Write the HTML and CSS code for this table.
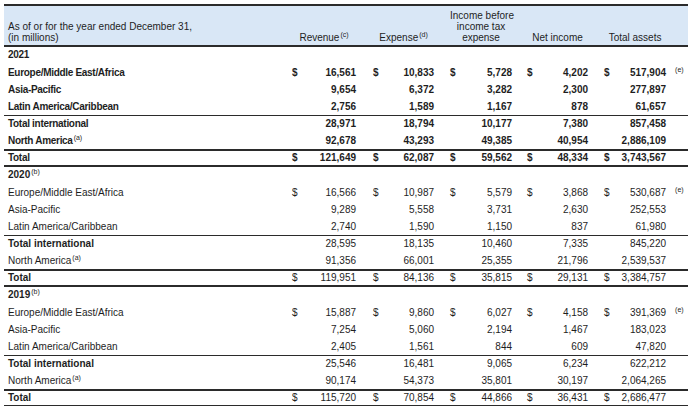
FILE: index.html
```html
<!DOCTYPE html>
<html>
<head>
<meta charset="utf-8">
<link rel="stylesheet" href="styles.css">
</head>
<body>
<table class="geo">
  <colgroup>
    <col class="c-lbl">
    <col class="c-d1"><col class="c-n1">
    <col class="c-d"><col class="c-n">
    <col class="c-d"><col class="c-n">
    <col class="c-d4"><col class="c-n4">
    <col class="c-d"><col class="c-n">
    <col class="c-fn">
  </colgroup>
  <thead>
    <tr>
      <th class="lbl">As of or for the year ended December 31,<br>(in millions)</th>
      <th colspan="2" class="h p1">Revenue<sup>(c)</sup></th>
      <th colspan="2" class="h p2">Expense<sup>(d)</sup></th>
      <th colspan="2" class="h p3">Income before<br>income tax<br>expense</th>
      <th colspan="2" class="h p4">Net income</th>
      <th colspan="2" class="h p5">Total assets</th>
      <th class="h"></th>
    </tr>
  </thead>
  <tbody class="cur">
    <tr class="yr"><td class="lbl" colspan="12">2021</td></tr>
    <tr><td class="lbl">Europe/Middle East/Africa</td><td class="d p1">$</td><td class="n">16,561</td><td class="d p2">$</td><td class="n">10,833</td><td class="d p3">$</td><td class="n">5,728</td><td class="d p4">$</td><td class="n">4,202</td><td class="d p5">$</td><td class="n">517,904</td><td class="fn">(e)</td></tr>
    <tr><td class="lbl">Asia-Pacific</td><td class="d p1"></td><td class="n">9,654</td><td class="d p2"></td><td class="n">6,372</td><td class="d p3"></td><td class="n">3,282</td><td class="d p4"></td><td class="n">2,300</td><td class="d p5"></td><td class="n">277,897</td><td class="fn"></td></tr>
    <tr><td class="lbl">Latin America/Caribbean</td><td class="d p1"></td><td class="n">2,756</td><td class="d p2"></td><td class="n">1,589</td><td class="d p3"></td><td class="n">1,167</td><td class="d p4"></td><td class="n">878</td><td class="d p5"></td><td class="n">61,657</td><td class="fn"></td></tr>
    <tr class="intl"><td class="lbl b">Total international</td><td class="d p1"></td><td class="n">28,971</td><td class="d p2"></td><td class="n">18,794</td><td class="d p3"></td><td class="n">10,177</td><td class="d p4"></td><td class="n">7,380</td><td class="d p5"></td><td class="n">857,458</td><td class="fn"></td></tr>
    <tr><td class="lbl">North America<sup>(a)</sup></td><td class="d p1"></td><td class="n">92,678</td><td class="d p2"></td><td class="n">43,293</td><td class="d p3"></td><td class="n">49,385</td><td class="d p4"></td><td class="n">40,954</td><td class="d p5"></td><td class="n">2,886,109</td><td class="fn"></td></tr>
    <tr class="tot"><td class="lbl b">Total</td><td class="d p1">$</td><td class="n">121,649</td><td class="d p2">$</td><td class="n">62,087</td><td class="d p3">$</td><td class="n">59,562</td><td class="d p4">$</td><td class="n">48,334</td><td class="d p5">$</td><td class="n">3,743,567</td><td class="fn"></td></tr>
  </tbody>
  <tbody>
    <tr class="yr"><td class="lbl b" colspan="12">2020<sup>(b)</sup></td></tr>
    <tr><td class="lbl">Europe/Middle East/Africa</td><td class="d p1">$</td><td class="n">16,566</td><td class="d p2">$</td><td class="n">10,987</td><td class="d p3">$</td><td class="n">5,579</td><td class="d p4">$</td><td class="n">3,868</td><td class="d p5">$</td><td class="n">530,687</td><td class="fn">(e)</td></tr>
    <tr><td class="lbl">Asia-Pacific</td><td class="d p1"></td><td class="n">9,289</td><td class="d p2"></td><td class="n">5,558</td><td class="d p3"></td><td class="n">3,731</td><td class="d p4"></td><td class="n">2,630</td><td class="d p5"></td><td class="n">252,553</td><td class="fn"></td></tr>
    <tr><td class="lbl">Latin America/Caribbean</td><td class="d p1"></td><td class="n">2,740</td><td class="d p2"></td><td class="n">1,590</td><td class="d p3"></td><td class="n">1,150</td><td class="d p4"></td><td class="n">837</td><td class="d p5"></td><td class="n">61,980</td><td class="fn"></td></tr>
    <tr class="intl"><td class="lbl b">Total international</td><td class="d p1"></td><td class="n">28,595</td><td class="d p2"></td><td class="n">18,135</td><td class="d p3"></td><td class="n">10,460</td><td class="d p4"></td><td class="n">7,335</td><td class="d p5"></td><td class="n">845,220</td><td class="fn"></td></tr>
    <tr><td class="lbl">North America<sup>(a)</sup></td><td class="d p1"></td><td class="n">91,356</td><td class="d p2"></td><td class="n">66,001</td><td class="d p3"></td><td class="n">25,355</td><td class="d p4"></td><td class="n">21,796</td><td class="d p5"></td><td class="n">2,539,537</td><td class="fn"></td></tr>
    <tr class="tot"><td class="lbl b">Total</td><td class="d p1">$</td><td class="n">119,951</td><td class="d p2">$</td><td class="n">84,136</td><td class="d p3">$</td><td class="n">35,815</td><td class="d p4">$</td><td class="n">29,131</td><td class="d p5">$</td><td class="n">3,384,757</td><td class="fn"></td></tr>
  </tbody>
  <tbody>
    <tr class="yr"><td class="lbl b" colspan="12">2019<sup>(b)</sup></td></tr>
    <tr><td class="lbl">Europe/Middle East/Africa</td><td class="d p1">$</td><td class="n">15,887</td><td class="d p2">$</td><td class="n">9,860</td><td class="d p3">$</td><td class="n">6,027</td><td class="d p4">$</td><td class="n">4,158</td><td class="d p5">$</td><td class="n">391,369</td><td class="fn">(e)</td></tr>
    <tr><td class="lbl">Asia-Pacific</td><td class="d p1"></td><td class="n">7,254</td><td class="d p2"></td><td class="n">5,060</td><td class="d p3"></td><td class="n">2,194</td><td class="d p4"></td><td class="n">1,467</td><td class="d p5"></td><td class="n">183,023</td><td class="fn"></td></tr>
    <tr><td class="lbl">Latin America/Caribbean</td><td class="d p1"></td><td class="n">2,405</td><td class="d p2"></td><td class="n">1,561</td><td class="d p3"></td><td class="n">844</td><td class="d p4"></td><td class="n">609</td><td class="d p5"></td><td class="n">47,820</td><td class="fn"></td></tr>
    <tr class="intl"><td class="lbl b">Total international</td><td class="d p1"></td><td class="n">25,546</td><td class="d p2"></td><td class="n">16,481</td><td class="d p3"></td><td class="n">9,065</td><td class="d p4"></td><td class="n">6,234</td><td class="d p5"></td><td class="n">622,212</td><td class="fn"></td></tr>
    <tr><td class="lbl">North America<sup>(a)</sup></td><td class="d p1"></td><td class="n">90,174</td><td class="d p2"></td><td class="n">54,373</td><td class="d p3"></td><td class="n">35,801</td><td class="d p4"></td><td class="n">30,197</td><td class="d p5"></td><td class="n">2,064,265</td><td class="fn"></td></tr>
    <tr class="tot"><td class="lbl b">Total</td><td class="d p1">$</td><td class="n">115,720</td><td class="d p2">$</td><td class="n">70,854</td><td class="d p3">$</td><td class="n">44,866</td><td class="d p4">$</td><td class="n">36,431</td><td class="d p5">$</td><td class="n">2,686,477</td><td class="fn"></td></tr>
  </tbody>
</table>
</body>
</html>
```

FILE: styles.css
```css
html, body {
  margin: 0;
  padding: 0;
  background: #ffffff;
}

body {
  font-family: "Liberation Sans", Arial, sans-serif;
  font-size: 10px;
  color: #1e1e1e;
}

.geo {
  margin: 4px 0 0 4px;
  width: 684px;
  table-layout: fixed;
  border-collapse: separate;
  border-spacing: 0;
}

.c-lbl { width: 286px; }
.c-d1 { width: 15px; }
.c-n1 { width: 52px; }
.c-d { width: 25px; }
.c-n { width: 53px; }
.c-d4 { width: 24px; }
.c-n4 { width: 52px; }
.c-fn { width: 21px; }

th, td {
  padding: 0;
  white-space: nowrap;
}

thead th {
  background: #d9e7f6;
  border-top: 2px solid #2b2b2b;
  border-bottom: 2px solid #2b2b2b;
  height: 37px;
  vertical-align: bottom;
  line-height: 11px;
  padding-bottom: 2px;
  font-weight: normal;
  box-sizing: content-box;
}

thead th.lbl {
  text-align: left;
  padding-left: 4px;
}

thead th.h {
  text-align: center;
  padding-right: 1px;
}

td {
  line-height: 17px;
  vertical-align: middle;
}

td.lbl {
  text-align: left;
  padding-left: 4px;
}

td.d { text-align: left; }
td.n { text-align: right; padding-right: 1px; }

.p1 { padding-left: 2px; }
.p2 { padding-left: 16px; }
.p3 { padding-left: 15px; }
.p4 { padding-left: 14px; }
.p5 { padding-left: 15px; }

td.fn {
  font-size: 7px;
  line-height: 8px;
  vertical-align: top;
  padding-top: 2px;
  padding-left: 8px;
  font-weight: normal;
}

.cur td { font-weight: bold; }
.cur td.fn { font-weight: normal; }
.cur td.lbl { letter-spacing: -0.3px; }

.b { font-weight: bold; }

tr.yr td {
  line-height: 15px;
  padding-bottom: 2px;
}

tr.intl td {
  border-top: 1px solid #2b2b2b;
  line-height: 16px;
}

tr.tot td {
  border-top: 2px solid #2b2b2b;
  border-bottom: 2px solid #2b2b2b;
  line-height: 14px;
}

tr.intl td.fn, tr.tot td.fn {
  line-height: 8px;
}

sup {
  font-size: 7px;
  line-height: 0;
  vertical-align: 4px;
  font-weight: normal;
  margin-left: 1px;
  letter-spacing: 0;
}
```
